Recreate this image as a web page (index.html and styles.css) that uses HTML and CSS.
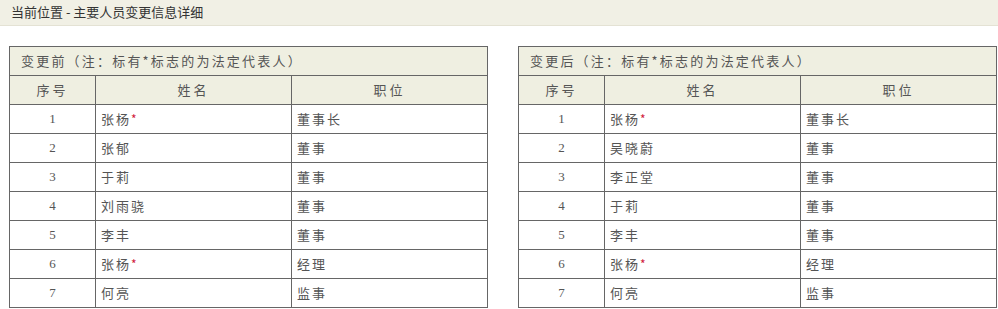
FILE: index.html
```html
<!DOCTYPE html>
<html lang="zh-CN">
<head>
<meta charset="utf-8">
<title>主要人员变更信息详细</title>
<link rel="stylesheet" href="styles.css">
</head>
<body>
<div class="crumb">当前位置 - 主要人员变更信息详细</div>
<div class="panels">
  <table class="grid">
    <colgroup><col class="c-no"><col class="c-name"><col class="c-pos"></colgroup>
    <tr><th class="cap" colspan="3">变更前（注：标有*标志的为法定代表人）</th></tr>
    <tr class="head"><th>序号</th><th>姓名</th><th>职位</th></tr>
    <tr><td class="no">1</td><td>张杨<span class="star">*</span></td><td>董事长</td></tr>
    <tr><td class="no">2</td><td>张郁</td><td>董事</td></tr>
    <tr><td class="no">3</td><td>于莉</td><td>董事</td></tr>
    <tr><td class="no">4</td><td>刘雨骁</td><td>董事</td></tr>
    <tr><td class="no">5</td><td>李丰</td><td>董事</td></tr>
    <tr><td class="no">6</td><td>张杨<span class="star">*</span></td><td>经理</td></tr>
    <tr><td class="no">7</td><td>何亮</td><td>监事</td></tr>
  </table>
  <table class="grid">
    <colgroup><col class="c-no"><col class="c-name"><col class="c-pos"></colgroup>
    <tr><th class="cap" colspan="3">变更后（注：标有*标志的为法定代表人）</th></tr>
    <tr class="head"><th>序号</th><th>姓名</th><th>职位</th></tr>
    <tr><td class="no">1</td><td>张杨<span class="star">*</span></td><td>董事长</td></tr>
    <tr><td class="no">2</td><td>吴晓蔚</td><td>董事</td></tr>
    <tr><td class="no">3</td><td>李正堂</td><td>董事</td></tr>
    <tr><td class="no">4</td><td>于莉</td><td>董事</td></tr>
    <tr><td class="no">5</td><td>李丰</td><td>董事</td></tr>
    <tr><td class="no">6</td><td>张杨<span class="star">*</span></td><td>经理</td></tr>
    <tr><td class="no">7</td><td>何亮</td><td>监事</td></tr>
  </table>
</div>
</body>
</html>
```
FILE: styles.css
```css
html, body {
  margin: 0;
  padding: 0;
  background: #fff;
  font-family: "Noto Sans CJK SC", "Noto Sans", sans-serif;
}
.crumb {
  height: 25px;
  line-height: 24px;
  padding-left: 11px;
  background: #f1f0e5;
  border-bottom: 1px solid #e4e2d4;
  color: #333;
  font-size: 13px;
}
.panels {
  display: flex;
  gap: 30px;
  padding: 20px 0 0 9px;
}
.grid {
  border-collapse: collapse;
  width: 479px;
  table-layout: fixed;
  color: #555;
  font-size: 13px;
  line-height: 18px;
}
.c-no { width: 86px; }
.c-name { width: 196px; }
.grid th, .grid td {
  border: 1px solid #666;
  height: 28px;
  padding: 0;
  font-weight: normal;
  letter-spacing: 2px;
}
.grid th {
  background: #efefe1;
  text-align: center;
  letter-spacing: 3px;
}
.grid th.cap {
  text-align: left;
  padding-left: 11px;
  letter-spacing: 2.2px;
}
.grid td {
  padding-left: 5px;
  background: #fff;
}
.grid td.no {
  text-align: center;
  padding-left: 0;
  font-family: "Liberation Serif", serif;
  font-size: 13px;
  letter-spacing: 0;
}
.star {
  color: #d0203a;
  font-size: 12px;
  vertical-align: 0;
}
```
